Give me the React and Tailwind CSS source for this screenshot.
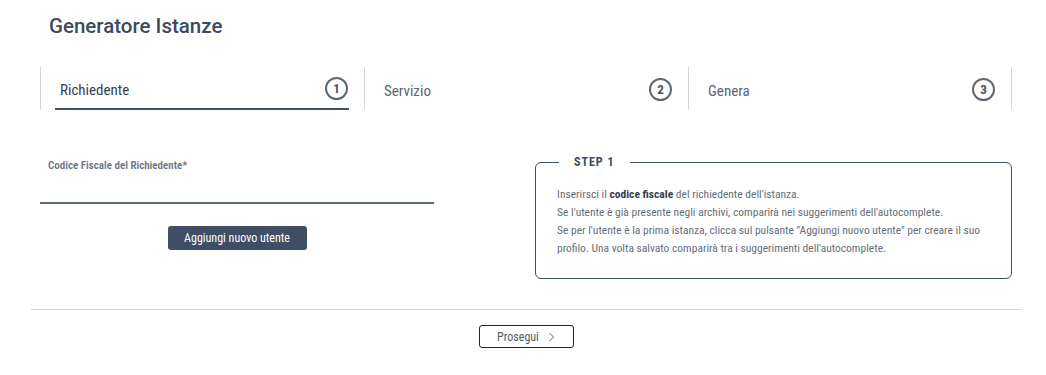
import React from "react";

function Step({ label, num, active, last }) {
  return (
    <div
      className={`w-[324px] h-[43px] border-l border-[#d6d6d6] ${last ? "border-r" : ""}`}
    >
      <div
        className={`ml-[14px] mr-[15px] h-full pl-[5px] pr-[1px] flex items-center justify-between ${
          active ? "border-b-2 border-[#435268]" : ""
        }`}
      >
        <span className={`pt-[5px] text-[15px] ${active ? "text-[#37404d]" : "text-[#5a6472]"}`}>{label}</span>
        <span className="mt-[2px] w-[23px] h-[23px] rounded-full border-2 border-[#5f6771] flex items-center justify-center text-[13px] font-bold text-[#4a525c] leading-none">
          {num}
        </span>
      </div>
    </div>
  );
}

export default function App() {
  return (
    <div className="w-[1046px] h-[375px] bg-white font-['Roboto_Condensed',Roboto,sans-serif] overflow-hidden">
      <h1 className="ml-[49px] mt-[12px] font-['Roboto',sans-serif] text-[20.5px] leading-[28px] font-medium text-[#3d4a5c]">
        Generatore Istanze
      </h1>

      <div className="ml-[40px] mt-[27px] flex">
        <Step label="Richiedente" num="1" active />
        <Step label="Servizio" num="2" />
        <Step label="Genera" num="3" last />
      </div>

      <div className="ml-[40px] w-[972px] mt-[44px] flex justify-between items-start">
        <div className="w-[394px] flex flex-col pt-[4px]">
          <label className="ml-[8px] text-[11px] leading-[16px] font-semibold text-[#6b7480]">
            Codice Fiscale del Richiedente*
          </label>
          <div className="h-[30px] border-b-2 border-[#5d6b7b]" />
          <div className="flex justify-center mt-[22px]">
            <button className="w-[139px] h-[24px] rounded-[3px] bg-[#404e65] text-white text-[12px]">
              Aggiungi nuovo utente
            </button>
          </div>
        </div>

        <fieldset className="w-[477px] h-[125px] border border-[#404e65] rounded-[6px] pl-[21px] pt-[15px]">
          <legend className="ml-[2px] px-[15px] text-[12px] leading-[16px] font-bold tracking-[1px] text-[#3d4a5c]">
            STEP 1
          </legend>
          <p className="text-[11.5px] leading-[18px] text-[#656e79] whitespace-nowrap">
            Inserirsci il <b className="font-bold text-[#37404d]">codice fiscale</b> del richiedente dell'istanza.
            <br />
            Se l'utente è già presente negli archivi, comparirà nei suggerimenti dell'autocomplete.
            <br />
            Se per l'utente è la prima istanza, clicca sul pulsante "Aggiungi nuovo utente" per creare il suo
            <br />
            profilo. Una volta salvato comparirà tra i suggerimenti dell'autocomplete.
          </p>
        </fieldset>
      </div>

      <div className="ml-[31px] mr-[25px] mt-[30px] border-t border-[#d3d3d3] flex justify-center pt-[15px]">
        <button className="w-[95px] h-[23px] rounded-[3px] border border-[#22272e] flex items-center justify-center gap-[9px] text-[12px] text-[#4f5b68]">
          Prosegui
          <svg width="7" height="10" viewBox="0 0 7 10" fill="none">
            <path d="M1.5 1 L5.5 5 L1.5 9" stroke="#5a6572" strokeWidth="1" />
          </svg>
        </button>
      </div>
    </div>
  );
}
